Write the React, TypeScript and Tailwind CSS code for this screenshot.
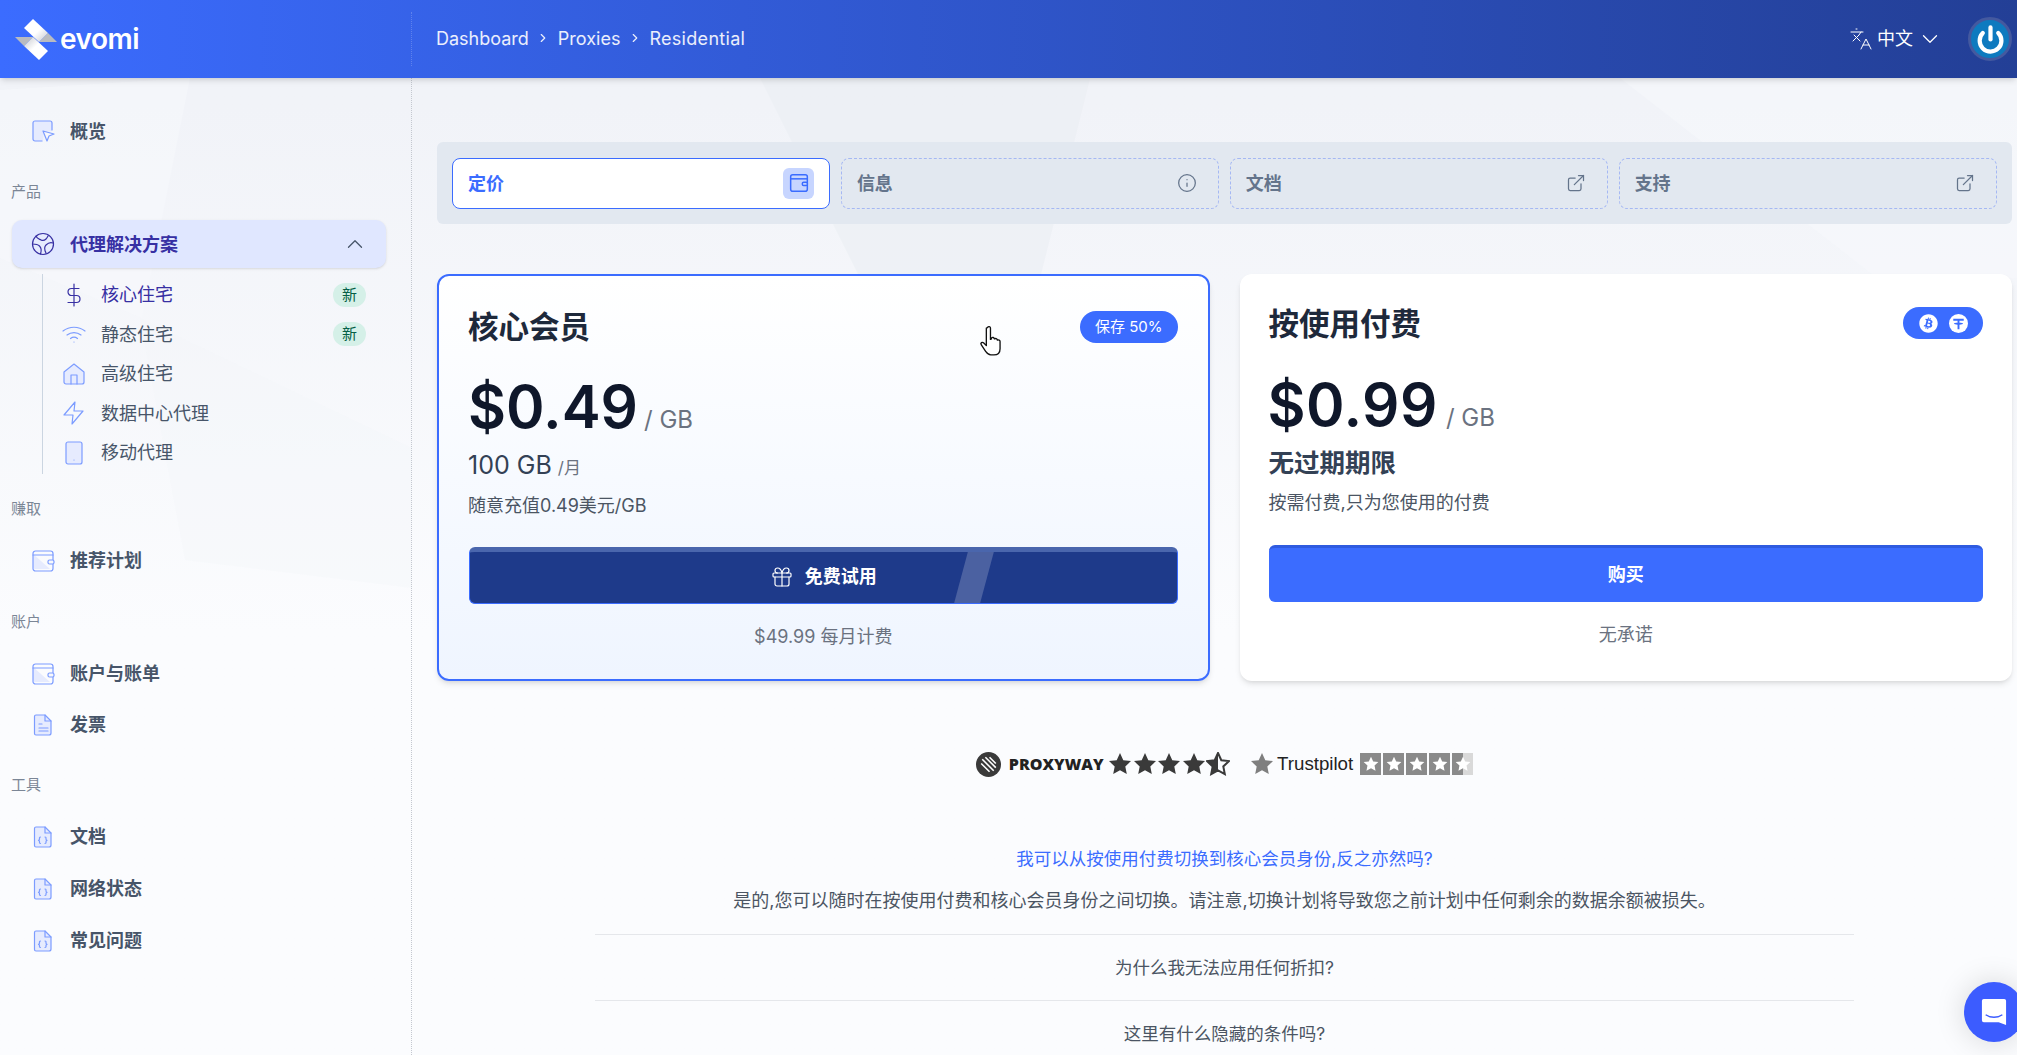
import { ChevronDown, ChevronRight, ChevronUp, ExternalLink, Gift, Info, Languages, Power } from "lucide-react";
import { FaBitcoin } from "react-icons/fa";
import type { ReactNode } from "react";

const FONT = "font-['Inter','Noto_Sans_CJK_SC',sans-serif]";

// duotone nav icons: pale fill, blue stroke
function DuoIcon({ kind, dark }: { kind: string; dark?: boolean }) {
  const stroke = dark ? "#3730a3" : "#7c9cff";
  const fill = "#e6ebfe";
  return (
    <svg width="24" height="24" viewBox="0 0 24 24" fill="none" stroke={stroke} strokeWidth="1.2" strokeLinecap="round" strokeLinejoin="round">
      {kind === "cursor" && (
        <>
          <path d="M4 2h15a2 2 0 0 1 2 2v8l-8 1-1 9H4a2 2 0 0 1-2-2V4a2 2 0 0 1 2-2z" fill={fill} stroke="none" />
          <path d="M11 22H4a2 2 0 0 1-2-2V4a2 2 0 0 1 2-2h15a2 2 0 0 1 2 2v7" />
          <path d="M12 12l11 3-5 2-2 5z" fill="#f7f8fc" />
        </>
      )}
      {kind === "globe" && (
        <>
          <circle cx="12" cy="12" r="10.5" fill={fill} />
          <path d="M5 4c1 3 3 3 5 4s4 0 5-1 2-3 2-3M1.5 12c3 0 5 0 7 2s2 5 1 8M22 11c-3-1-5 0-7 2s-1 6 0 8" />
        </>
      )}
      {kind === "wallet" && (
        <>
          <path d="M2 5l17 15H4a2 2 0 0 1-2-2z" fill={fill} stroke="none" />
          <rect x="2" y="2" width="20" height="20" rx="2.5" />
          <path d="M2 6h20" />
          <rect x="17" y="11" width="6" height="4" rx="1.5" fill="#f7f8fc" />
        </>
      )}
      {kind === "doc" && (
        <>
          <path d="M5 2h9l6 6v12a2 2 0 0 1-2 2H5a1.5 1.5 0 0 1-1.5-1.5v-17A1.5 1.5 0 0 1 5 2z" fill={fill} />
          <path d="M14 2v6h6M8 11h3M8 15h9M8 18h9" />
        </>
      )}
      {kind === "code" && (
        <>
          <path d="M5 2h9l6 6v12a2 2 0 0 1-2 2H5a1.5 1.5 0 0 1-1.5-1.5v-17A1.5 1.5 0 0 1 5 2z" fill={fill} />
          <path d="M14 2v6h6M9.5 12c-1.2 0-1 1-1 2s-.6 1.2-1 1.3c.4.1 1 .3 1 1.3s-.2 1.9 1 1.9M14 12c1.2 0 1 1 1 2s.6 1.2 1 1.3c-.4.1-1 .3-1 1.3s.2 1.9-1 1.9" />
        </>
      )}
      {kind === "dollar" && <path d="M12 1v22M17 5.5H9.5a3.5 3.5 0 0 0 0 7h5a3.5 3.5 0 0 1 0 7H6" />}
      {kind === "wifi" && <path d="M1 9c6.500-5 15.500-5 22 0M5 13c4.200-3.300 9.800-3.300 14 0M8.500 16.500c2-1.500 5-1.500 7 0M12 20h.01" />}
      {kind === "home" && (
        <>
          <path d="M2 10l10-8 10 8v10a2 2 0 0 1-2 2H4a2 2 0 0 1-2-2z" fill={fill} />
          <path d="M9 22v-9h6v9" />
        </>
      )}
      {kind === "bolt" && <path d="M13 1L2 14h9l-1 9 11-13h-9z" />}
      {kind === "tablet" && (
        <>
          <rect x="4" y="1" width="16" height="22" rx="2" fill={fill} />
          <path d="M12 19h.01" />
        </>
      )}
    </svg>
  );
}

function SectionLabel({ children, className }: { children: ReactNode; className: string }) {
  return <div className={`pl-[11px] text-[15px] leading-[20px] text-[#7b8696] ${className}`}>{children}</div>;
}

function NavItem({ icon, label, className }: { icon: string; label: string; className: string }) {
  return (
    <div className={`flex h-[40px] items-center gap-[15px] pl-[31px] ${className}`}>
      <DuoIcon kind={icon} />
      <span className="text-[18px] font-bold text-[#475569]">{label}</span>
    </div>
  );
}

const subItems = [
  { icon: "dollar", label: "核心住宅", badge: true, active: true },
  { icon: "wifi", label: "静态住宅", badge: true },
  { icon: "home", label: "高级住宅" },
  { icon: "bolt", label: "数据中心代理" },
  { icon: "tablet", label: "移动代理" },
];

function Sidebar() {
  return (
    <aside className="w-[412px] shrink-0 border-r border-dotted border-[#c4c8d0] pt-[33px]">
      <NavItem icon="cursor" label="概览" className="" />
      <SectionLabel className="mt-[31px]">产品</SectionLabel>
      <div className="ml-[12px] mr-[25px] mt-[18px] flex h-[48px] items-center rounded-[10px] bg-[#e0e7ff] pl-[19px] pr-[18px] shadow-sm">
        <DuoIcon kind="globe" dark />
        <span className="ml-[15px] flex-1 text-[18px] font-bold text-[#3730a3]">代理解决方案</span>
        <ChevronUp size={26} strokeWidth={1.2} className="text-[#475569]" />
      </div>
      <div className="ml-[42px] mt-[6px] w-[324px] border-l border-[#cbd5e1] py-[1px]">
        {subItems.map((it) => (
          <div key={it.label} className="flex h-[39.500px] items-center pl-[19px]">
            <DuoIcon kind={it.icon} dark={it.active} />
            <span className={`ml-[15px] flex-1 text-[18px] ${it.active ? "text-[#3730a3]" : "text-[#475569]"}`}>{it.label}</span>
            {it.badge && (
              <span className="rounded-full bg-[#d5f0e8] px-[9px] text-[15px] leading-[24px] text-[#065f46]">新</span>
            )}
          </div>
        ))}
      </div>
      <SectionLabel className="mt-[25px]">赚取</SectionLabel>
      <NavItem icon="wallet" label="推荐计划" className="mt-[22px]" />
      <SectionLabel className="mt-[31px]">账户</SectionLabel>
      <NavItem icon="wallet" label="账户与账单" className="mt-[22px]" />
      <NavItem icon="doc" label="发票" className="mt-[11px]" />
      <SectionLabel className="mt-[30px]">工具</SectionLabel>
      <NavItem icon="code" label="文档" className="mt-[22px]" />
      <NavItem icon="code" label="网络状态" className="mt-[12px]" />
      <NavItem icon="code" label="常见问题" className="mt-[12px]" />
    </aside>
  );
}

function Logo() {
  return (
    <svg width="42" height="41" viewBox="0 0 42 41">
      <defs>
        <linearGradient id="band" x1="0" y1="0" x2="1" y2="1">
          <stop offset="0" stopColor="#ffffff" />
          <stop offset="0.55" stopColor="#ffffff" />
          <stop offset="1" stopColor="#c4c6cc" />
        </linearGradient>
        <linearGradient id="band2" x1="1" y1="1" x2="0" y2="0">
          <stop offset="0" stopColor="#ffffff" />
          <stop offset="0.55" stopColor="#ffffff" />
          <stop offset="1" stopColor="#c4c6cc" />
        </linearGradient>
      </defs>
      <path d="M33 14l9 9H24z" fill="#b9bbc0" />
      <path d="M9 27L0 18h18z" fill="#b9bbc0" />
      <path d="M18 0l15 14-9 9L9 9z" fill="url(#band)" />
      <path d="M24 41L9 27l9-9 15 14z" fill="url(#band2)" />
    </svg>
  );
}

function Header() {
  return (
    <header className="relative z-10 flex h-[78px] shrink-0 items-center bg-gradient-to-r from-[#3b6cff] to-[#233f96] shadow-md">
      <div className="flex h-[54px] w-[412px] shrink-0 items-center gap-[3px] border-r border-dotted border-white/20 pl-[15px]">
        <Logo />
        <span className="font-['Inter',sans-serif] text-[28px] font-semibold leading-none tracking-[-0.5px] text-white">evomi</span>
      </div>
      <nav className="ml-[24px] flex items-center gap-[7.500px] pb-[2px] text-[18px] text-white/90">
        <span>Dashboard</span>
        <ChevronRight size={14} />
        <span>Proxies</span>
        <ChevronRight size={14} />
        <span className="tracking-[0.3px]">Residential</span>
      </nav>
      <div className="ml-auto flex items-center text-white">
        <Languages size={24} strokeWidth={1} />
        <span className="ml-[4px] pb-[2px] text-[18px]">中文</span>
        <ChevronDown size={26} strokeWidth={1.2} className="ml-[4px]" />
        <div className="ml-[25px] mr-[5px] flex h-[44px] w-[44px] items-center justify-center rounded-full border-[3px] border-[#44599f] bg-[#0e7abf]">
          <Power size={29} strokeWidth={3.500} className="text-white" />
        </div>
      </div>
    </header>
  );
}

function Tab({ label, active, icon }: { label: string; active?: boolean; icon: ReactNode }) {
  return (
    <div
      className={`flex h-[51px] items-center justify-between rounded-[8px] pl-[15px] ${
        active ? "border border-[#3b6cff] bg-white pr-[15px]" : "border border-dashed border-[#a5b8f3] pr-[21px]"
      }`}
    >
      <span className={`text-[18px] font-bold ${active ? "text-[#3b6cff]" : "text-[#64748b]"}`}>{label}</span>
      {icon}
    </div>
  );
}

function Tabs() {
  return (
    <div className="grid h-[82px] grid-cols-4 items-center gap-[10.500px] rounded-[6px] bg-[#e2e8f0] px-[15px]">
      <Tab
        label="定价"
        active
        icon={
          <span className="flex h-[31px] w-[31px] items-center justify-center rounded-[6px] bg-[#c7d5ff]">
            <svg width="20" height="20" viewBox="0 0 24 24" fill="none" stroke="#3b6cff" strokeWidth="1.8">
              <rect x="2" y="2" width="20" height="20" rx="2.500" />
              <path d="M2 7h20" />
              <rect x="16" y="11" width="6" height="4" rx="1.500" fill="#c7d5ff" />
            </svg>
          </span>
        }
      />
      <Tab label="信息" icon={<Info size={20} strokeWidth={1.5} className="text-[#64748b]" />} />
      <Tab label="文档" icon={<ExternalLink size={20} strokeWidth={1.5} className="text-[#64748b]" />} />
      <Tab label="支持" icon={<ExternalLink size={20} strokeWidth={1.5} className="text-[#64748b]" />} />
    </div>
  );
}

function CoreCard() {
  return (
    <div className="relative h-[407px] rounded-[12px] border-2 border-[#3b6cff] bg-gradient-to-b from-white to-[#eff5ff] px-[30px] pt-[29px] shadow-md">
      <div className="flex items-center justify-between">
        <h2 className="ml-[-1px] text-[30.500px] font-bold leading-[44px] text-[#1e293b]">核心会员</h2>
        <span className="rounded-full bg-[#3b6cff] px-[15px] text-[15px] leading-[32px] text-white">保存 50%</span>
      </div>
      <div className="mt-[18px] flex items-baseline">
        <span className="ml-[-1px] text-[58.500px] font-semibold leading-[80px] text-[#0f172a]">$0.49</span>
        <span className="ml-[6px] text-[24px] text-[#6b7280]">/ GB</span>
      </div>
      <div className="mt-[3px] flex items-baseline leading-[30px]">
        <span className="ml-[-1px] text-[25px] text-[#334155]">100 GB</span>
        <span className="ml-[6px] text-[17px] text-[#6b7280]">/月</span>
      </div>
      <p className="ml-[-1px] mt-[8px] text-[18px] leading-[30px] text-[#4b5563]">随意充值0.49美元/GB</p>
      <button className="relative mt-[26px] flex h-[57px] w-full items-center justify-center gap-[11px] overflow-hidden rounded-[6px] border border-[#3b6cff] border-t-[5px] border-t-[#4a66ad] bg-[#1e3a8a] pb-[2px] text-[18px] font-bold text-white">
        <Gift size={24} strokeWidth={1.2} />
        免费试用
        <span className="absolute inset-y-[-5px] left-[491px] w-[26px] -skew-x-[15deg] bg-white/20" />
      </button>
      <p className="mt-[18px] text-center text-[18px] leading-[30px] text-[#6b7280]">$49.99 每月计费</p>
    </div>
  );
}

function PayCard() {
  return (
    <div className="h-[407px] rounded-[12px] bg-white px-[29px] pt-[28px] shadow-md">
      <div className="flex items-center justify-between">
        <h2 className="text-[30.500px] font-bold leading-[44px] text-[#1e293b]">按使用付费</h2>
        <span className="mt-[-2px] flex h-[32px] w-[80px] items-center justify-center gap-[11px] rounded-full bg-[#3b6cff] text-white">
          <FaBitcoin size={19} />
          <svg width="19" height="19" viewBox="0 0 20 20">
            <circle cx="10" cy="10" r="10" fill="#fff" />
            <path d="M4.500 5h11v2h-4.500v2.200c2 .1 3.800.5 3.800 1s-1.800.9-3.800 1V16H9v-4.800c-2-.1-3.800-.5-3.800-1s1.800-.9 3.800-1V7H4.500z" fill="#3b6cff" />
          </svg>
        </span>
      </div>
      <div className="mt-[19px] flex items-baseline">
        <span className="ml-[-1px] text-[58.500px] font-semibold leading-[80px] tracking-[0.5px] text-[#0f172a]">$0.99</span>
        <span className="ml-[8px] text-[24px] text-[#6b7280]">/ GB</span>
      </div>
      <p className="mt-[3px] text-[25.500px] font-bold leading-[30px] text-[#334155]">无过期期限</p>
      <p className="mt-[10px] text-[18px] leading-[30px] text-[#4b5563]">按需付费,只为您使用的付费</p>
      <button className="mt-[27px] h-[57px] w-full rounded-[6px] border-t-[3px] border-t-[#2f5be0] bg-[#3b6cff] pb-[2px] text-[18px] font-bold text-white">购买</button>
      <p className="mt-[18px] text-center text-[18px] leading-[30px] text-[#6b7280]">无承诺</p>
    </div>
  );
}

const STAR = "M12 1l3.300 7.200 7.700.9-5.700 5.300 1.500 7.700L12 18.300 5.200 22.100l1.500-7.700L1 9.100l7.700-.9z";

function Ratings() {
  return (
    <div className="mt-[67px] flex h-[32px] items-center justify-center">
      <svg width="25" height="25" viewBox="0 0 24 24" className="mr-[8px]">
        <circle cx="12" cy="12" r="12" fill="#3a3a3a" />
        <path d="M6 7l11 11M5 11l8 8M9 5l10 10M13 5l6 6" stroke="#fff" strokeWidth="1.500" />
      </svg>
      <span className="mr-[4px] font-['Open_Sans',sans-serif] text-[16px] font-extrabold text-[#222]">PROXYWAY</span>
      {[0, 1, 2, 3, 4].map((i) => (
        <svg key={i} width="24" height="24" viewBox="0 0 24 24" className="ml-[0.500px]">
          {i === 4 ? (
            <>
              <path d={STAR} fill="none" stroke="#3a3a3a" strokeWidth="2" />
              <path d="M12 1v17.300L5.200 22.100l1.500-7.700L1 9.100l7.700-.9z" fill="#3a3a3a" />
            </>
          ) : (
            <path d={STAR} fill="#3a3a3a" />
          )}
        </svg>
      ))}
      <svg width="24" height="24" viewBox="0 0 24 24" className="ml-[20px]">
        <path d={STAR} fill="#7f7f7f" />
      </svg>
      <span className="ml-[3px] font-['Liberation_Sans',sans-serif] text-[18.700px] text-[#222]">Trustpilot</span>
      <div className="ml-[7px] flex gap-[2px]">
        {[0, 1, 2, 3, 4].map((i) => (
          <span key={i} className={`flex h-[22px] w-[21px] items-center justify-center ${i === 4 ? "bg-gradient-to-r from-[#8a8a8a] from-50% to-[#d9d9d9] to-50%" : "bg-[#8a8a8a]"}`}>
            <svg width="16" height="16" viewBox="0 0 24 24">
              <path d={STAR} fill="#fff" />
            </svg>
          </span>
        ))}
      </div>
    </div>
  );
}

function Faq() {
  return (
    <div className="mx-auto mt-[64px] w-[1259px] text-center text-[17.500px] text-[#4b5563]">
      <div className="border-b border-[#e5e7eb] pb-[18px]">
        <p className="leading-[30px] text-[#3b6cff]">我可以从按使用付费切换到核心会员身份,反之亦然吗?</p>
        <p className="mt-[12px] text-[18px] leading-[30px]">是的,您可以随时在按使用付费和核心会员身份之间切换。请注意,切换计划将导致您之前计划中任何剩余的数据余额被损失。</p>
      </div>
      <div className="border-b border-[#e5e7eb] pb-[17px] pt-[18px] leading-[30px]">为什么我无法应用任何折扣?</div>
      <div className="pt-[18px] leading-[30px]">这里有什么隐藏的条件吗?</div>
    </div>
  );
}

export default function App() {
  return (
    <div className={`relative flex h-screen flex-col overflow-hidden bg-gradient-to-b from-[#f1f3f8] from-10% to-[#fbfcfe] to-60% ${FONT}`}>
      {/* faint facets behind the page */}
      <svg className="pointer-events-none absolute inset-0 h-full w-full" viewBox="0 0 2017 1055" preserveAspectRatio="none">
        <path d="M0 90l190-12-48 240L0 258z" fill="#f7f8fb" opacity="0.6" />
        <path d="M140 318l272 130v140L185 560z" fill="#f2f4f8" opacity="0.3" />
        <path d="M760 78h330l-50 200H860z" fill="#e9ecf3" opacity="0.55" />
        <path d="M1620 78h397v200l-140 0z" fill="#f7f8fb" opacity="0.6" />
      </svg>
      <Header />
      <div className="relative flex min-h-0 flex-1">
        <Sidebar />
        <main className="min-w-0 flex-1 pl-[25px] pr-[5px] pt-[64px]">
          <Tabs />
          <div className="mt-[50px] grid grid-cols-2 gap-[30px]">
            <CoreCard />
            <PayCard />
          </div>
          <Ratings />
          <Faq />
        </main>
      </div>
      <div className="absolute bottom-[13px] right-[-7px] flex h-[60px] w-[60px] items-center justify-center rounded-full bg-[#3c5cff] shadow-[0_0_30px_rgba(0,0,0,0.15)]">
        <svg width="26" height="30" viewBox="0 0 28 30">
          <path d="M3 1h22a2 2 0 0 1 2 2v26l-8-3H3a2 2 0 0 1-2-2V3a2 2 0 0 1 2-2z" fill="#fff" />
          <path d="M5 18c5 3.500 13 3.500 18 0" stroke="#3c5cff" strokeWidth="1.500" fill="none" />
        </svg>
      </div>
      <svg width="25" height="33" viewBox="0 0 24 32" className="absolute left-[979px] top-[325px]">
        <path d="M8 2.500c1-1.500 3-1 3 .5v11l1-.5v-1c1-1 2.500-.5 2.500.5l.5.5c1-.8 2.500-.3 2.500.8l.3.4c1-.6 2.500 0 2.500 1.200V23c0 4-2 6-6 6h-3c-3 0-4-2-5-3.500L2 19c-1-1.500 1-3 2.500-1.500L7 20V3z" fill="#fff" stroke="#111" strokeWidth="1.300" strokeLinejoin="round" />
      </svg>
    </div>
  );
}
